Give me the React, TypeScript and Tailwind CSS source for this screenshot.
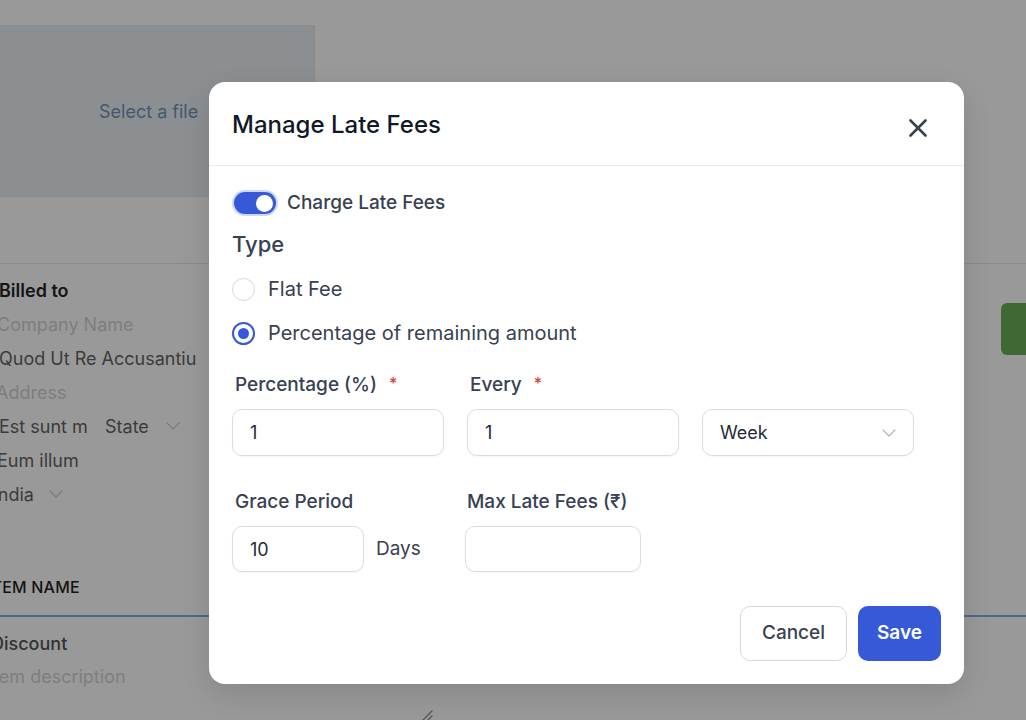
import React from "react";

function Chevron({ className = "" }: { className?: string }) {
  return (
    <svg className={className} width="14" height="8" viewBox="0 0 14 8" fill="none">
      <path d="M1 1l6 6 6-6" stroke="currentColor" strokeWidth="1.2" strokeLinecap="round" strokeLinejoin="round" />
    </svg>
  );
}

function Radio({ checked, label }: { checked?: boolean; label: string }) {
  return (
    <div className="flex items-center h-[24px]">
      {checked ? (
        <span className="w-[23px] h-[23px] rounded-full border-2 border-[#3659d8] flex items-center justify-center bg-white">
          <span className="w-[11px] h-[11px] rounded-full bg-[#3659d8]" />
        </span>
      ) : (
        <span className="w-[23px] h-[23px] rounded-full border border-[#d4d7dc] bg-white" />
      )}
      <span className="ml-[13px] text-[20px] text-[#374151]">{label}</span>
    </div>
  );
}

const inputCls =
  "rounded-[10px] border border-[#d9dce1] shadow-[0_1px_2px_rgba(0,0,0,0.04)] flex items-center px-[17px] text-[18px] text-[#1f2937]";

export default function App() {
  return (
    <div className="relative w-[1026px] h-[720px] overflow-hidden bg-[#999999] font-['Inter',sans-serif]">
      {/* dimmed page underneath */}
      <div className="-ml-[6px] w-[1100px]">
        <div className="h-[263px] pt-[25px]">
          <div className="w-[321px] h-[172px] bg-[#8c8f92] border border-dashed border-[#888b8e] flex items-center pl-[104px]">
            <span className="text-[18px] text-[#44576c] whitespace-nowrap">Select a file</span>
          </div>
        </div>
        <div className="border-t border-[#8b8b8b]" />
        <div className="flex justify-between">
          <div className="pt-[9px] pl-[5px] flex flex-col text-[18px]">
            <div className="h-[34px] flex items-center font-semibold text-[#141414]">Billed to</div>
            <div className="h-[34px] flex items-center text-[#7e7e7e] -ml-[2px]">Company Name</div>
            <div className="h-[34px] flex items-center text-[#3b3b3b]">Quod Ut Re Accusantiu</div>
            <div className="h-[34px] flex items-center text-[#7e7e7e] -ml-[3px]">Address</div>
            <div className="h-[34px] flex items-center text-[#3b3b3b]">
              <span className="w-[106px]">Est sunt m</span>
              <span>State</span>
              <Chevron className="ml-[17px] text-[#7c7c7c]" />
            </div>
            <div className="h-[34px] flex items-center text-[#3b3b3b] -ml-[2px]">Eum illum</div>
            <div className="h-[34px] flex items-center text-[#3b3b3b] -ml-[6px]">
              <span>India</span>
              <Chevron className="ml-[15px] text-[#7c7c7c]" />
            </div>
          </div>
          <div className="mt-[39px] w-[93px] h-[52px] rounded-[6px] bg-[#3f6834]" />
        </div>
        <div className="mt-[64px] h-[24px] flex items-center -ml-[7px] text-[16px] font-medium text-[#141414] tracking-[0.2px]">
          ITEM NAME
        </div>
        <div className="mt-[16px] border-b-2 border-[#4b6a87]" />
        <div className="mt-[10px] h-[33px] flex items-center -ml-[3px] text-[18px] font-medium text-[#333333]">Discount</div>
        <div className="h-[33px] flex items-center -ml-[6px] text-[18px] text-[#7e7e7e]">Item description</div>
        <div className="mt-[17px] pl-[427px]">
          <svg width="12" height="12" viewBox="0 0 12 12" fill="none">
            <path d="M1 11L11 1M6 11L11 6" stroke="#555" strokeWidth="1.2" strokeLinecap="round" />
          </svg>
        </div>
      </div>

      {/* modal */}
      <div className="absolute left-[209px] top-[82px] w-[755px] h-[602px] bg-white rounded-[16px] shadow-[0_10px_30px_rgba(0,0,0,0.12)] flex flex-col">
        <div className="h-[84px] shrink-0 border-b border-[#ebebed] flex items-center justify-between pl-[23px] pr-[37px]">
          <h2 className="mt-[2px] text-[24px] font-medium text-[#111827]">Manage Late Fees</h2>
          <svg className="mt-[8px]" width="18" height="18" viewBox="0 0 18 18" fill="none">
            <path d="M1.5 1.5l15 15M16.5 1.5l-15 15" stroke="#374151" strokeWidth="2.6" strokeLinecap="round" />
          </svg>
        </div>
        <div className="px-[23px] pt-[25px] flex flex-col">
          <div className="h-[24px] flex items-center">
            <span className="ml-[2px] w-[42px] h-[22px] rounded-full bg-[#3659d8] ring-2 ring-[#cdd6f6] flex items-center justify-end pr-[3px]">
              <span className="w-[17px] h-[17px] rounded-full bg-white" />
            </span>
            <span className="ml-[11px] text-[19px] font-medium text-[#374151]">Charge Late Fees</span>
          </div>
          <div className="mt-[15px] h-[28px] flex items-center text-[22px] font-medium text-[#374151]">Type</div>
          <div className="mt-[19px]">
            <Radio label="Flat Fee" />
          </div>
          <div className="mt-[20px]">
            <Radio checked label="Percentage of remaining amount" />
          </div>

          <div className="mt-[28px] grid grid-cols-[212px_212px_212px] gap-x-[23px]">
            <div className="h-[24px] flex items-center pl-[3px] text-[19px] font-medium text-[#374151]">
              Percentage (%)<span className="ml-[12px] text-[16px] text-[#d0453a] -mt-[4px]">*</span>
            </div>
            <div className="h-[24px] flex items-center pl-[3px] text-[19px] font-medium text-[#374151]">
              Every<span className="ml-[12px] text-[16px] text-[#d0453a] -mt-[4px]">*</span>
            </div>
            <div />
            <div className={`mt-[12px] h-[47px] ${inputCls}`}>1</div>
            <div className={`mt-[12px] h-[47px] ${inputCls}`}>1</div>
            <div className={`mt-[12px] h-[47px] justify-between ${inputCls}`}>
              <span>Week</span>
              <Chevron className="text-[#b3b7bd]" />
            </div>
          </div>

          <div className="mt-[34px] flex">
            <div className="w-[233px] flex flex-col">
              <div className="h-[24px] flex items-center pl-[3px] text-[19px] font-medium text-[#374151]">Grace Period</div>
              <div className="mt-[12px] flex items-center">
                <div className={`w-[132px] h-[46px] ${inputCls}`}>10</div>
                <span className="ml-[12px] text-[19px] text-[#374151]">Days</span>
              </div>
            </div>
            <div className="flex flex-col">
              <div className="h-[24px] flex items-center pl-[2px] text-[19px] font-medium text-[#374151]">Max Late Fees (₹)</div>
              <div className={`mt-[12px] w-[176px] h-[46px] ${inputCls}`} />
            </div>
          </div>

          <div className="mt-[34px] flex justify-end gap-[11px]">
            <button className="w-[107px] h-[55px] rounded-[10px] border border-[#d6d8dc] bg-white text-[19px] font-medium text-[#374151]">Cancel</button>
            <button className="w-[83px] h-[55px] rounded-[10px] bg-[#3659d8] text-[19px] font-semibold text-white">Save</button>
          </div>
        </div>
      </div>
    </div>
  );
}
